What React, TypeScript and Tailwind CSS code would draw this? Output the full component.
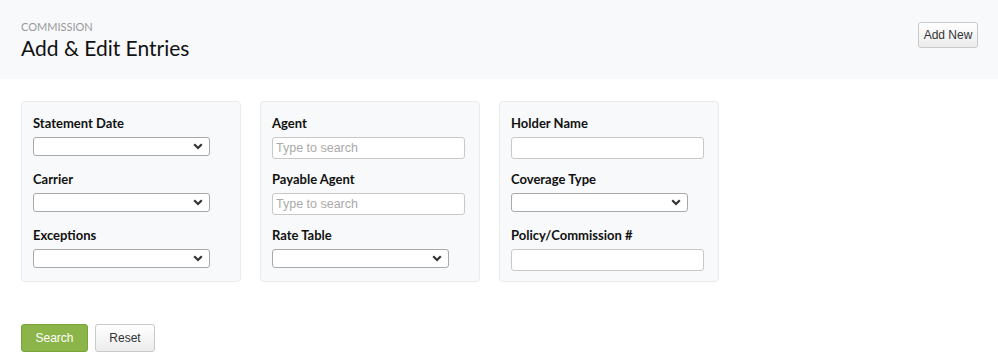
import React from "react";

const labelFont = { fontFamily: "Lato, 'Noto Sans', sans-serif" };

function Chevron() {
  return (
    <svg width="10" height="7" viewBox="0 0 10 7" className="text-[#333]">
      <path d="M1.2 1.2 L5 5 L8.8 1.2" fill="none" stroke="currentColor" strokeWidth="2.2" />
    </svg>
  );
}

function Select({ width }: { width: string }) {
  return (
    <div
      className={`${width} h-[19px] bg-white border border-[#a9a9a9] rounded-[3px] flex items-center justify-end pr-[6px]`}
    >
      <Chevron />
    </div>
  );
}

function TextInput({ placeholder }: { placeholder?: string }) {
  return (
    <input
      placeholder={placeholder}
      className="block w-[193px] h-[22px] bg-white border border-[#c8c8c8] rounded-[3px] px-[3px] text-[12.5px] text-[#333] placeholder-[#aaa] outline-none font-['Liberation_Sans',Arial,sans-serif]"
    />
  );
}

function Field({ label, children, last }: { label: string; children: React.ReactNode; last?: boolean }) {
  return (
    <div className={last ? "" : "h-[56px]"}>
      <div className="text-[13px] font-bold text-[#111] leading-[16px] mb-[6px]" style={labelFont}>
        {label}
      </div>
      {children}
    </div>
  );
}

function Card({ children }: { children: React.ReactNode }) {
  return (
    <div className="w-[220px] h-[181px] bg-[#f8f9fa] border border-[#ebebeb] rounded-[4px] px-[11px] pt-[13px]">
      {children}
    </div>
  );
}

export default function App() {
  return (
    <div className="w-[998px] h-[360px] bg-white">
      <div className="h-[79px] bg-[#f8f9fb] flex items-start justify-between pl-[21px] pr-[20px]">
        <div className="pt-[20px]">
          <div className="text-[11px] text-[#999] leading-[14px] uppercase" style={labelFont}>
            Commission
          </div>
          <div className="text-[21px] text-[#111] leading-[26px] mt-[1px]" style={labelFont}>
            Add &amp; Edit Entries
          </div>
        </div>
        <button className="mt-[22px] w-[60px] h-[26px] text-[12px] text-[#333] bg-gradient-to-b from-white to-[#ececec] border border-[#c9c9c9] rounded-[3px] font-['Liberation_Sans',Arial,sans-serif]">
          Add New
        </button>
      </div>

      <div className="flex gap-[19px] pl-[21px] mt-[22px]">
        <Card>
          <Field label="Statement Date">
            <Select width="w-[177px]" />
          </Field>
          <Field label="Carrier">
            <Select width="w-[177px]" />
          </Field>
          <Field label="Exceptions" last>
            <Select width="w-[177px]" />
          </Field>
        </Card>
        <Card>
          <Field label="Agent">
            <TextInput placeholder="Type to search" />
          </Field>
          <Field label="Payable Agent">
            <TextInput placeholder="Type to search" />
          </Field>
          <Field label="Rate Table" last>
            <Select width="w-[177px]" />
          </Field>
        </Card>
        <Card>
          <Field label="Holder Name">
            <TextInput />
          </Field>
          <Field label="Coverage Type">
            <Select width="w-[177px]" />
          </Field>
          <Field label="Policy/Commission #" last>
            <TextInput />
          </Field>
        </Card>
      </div>

      <div className="flex gap-[7px] pl-[21px] mt-[42px]">
        <button className="w-[67px] h-[28px] text-[12px] text-white bg-[#8bb548] border border-[#7aa33c] rounded-[3px] font-['Liberation_Sans',Arial,sans-serif]">
          Search
        </button>
        <button className="w-[60px] h-[28px] text-[12px] text-[#333] bg-gradient-to-b from-white to-[#ececec] border border-[#c9c9c9] rounded-[3px] font-['Liberation_Sans',Arial,sans-serif]">
          Reset
        </button>
      </div>
    </div>
  );
}
